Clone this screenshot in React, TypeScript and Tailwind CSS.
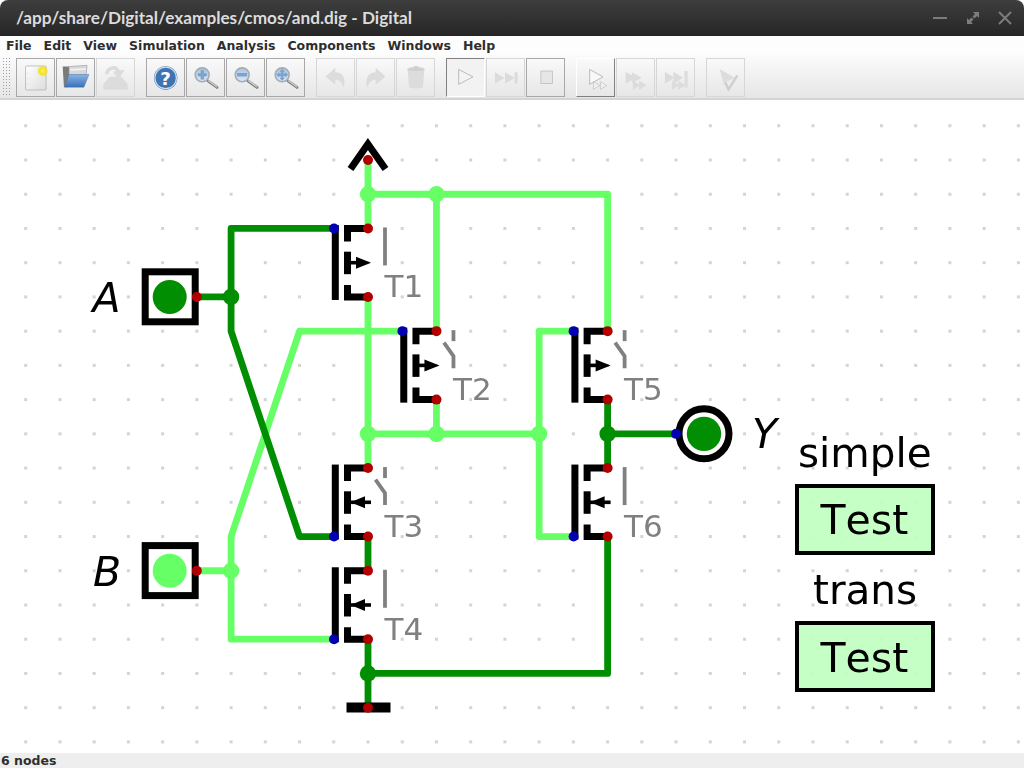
import React from "react";

const LIGHT = "#66ff66";
const DARK = "#028e02";
const RED = "#b20000";
const BLUE = "#0000b2";
const GX = (c: number) => 25.7 + 34.23 * c;
const GY = (r: number) => 160 + 34.23 * r;

type P = [number, number];
const poly = (pts: P[]) => pts.map(([c, r]) => `${GX(c)},${GY(r)}`).join(" ");

const lightWires: P[][] = [
  [[10, 0], [10, 2]],
  [[10, 1], [17, 1], [17, 5]],
  [[12, 1], [12, 5]],
  [[10, 4], [10, 9]],
  [[11, 5], [8, 5], [6, 11], [6, 14], [9, 14]],
  [[5, 12], [6, 12]],
  [[12, 7], [12, 8]],
  [[10, 8], [15, 8]],
  [[16, 5], [15, 5], [15, 11], [16, 11]],
];
const darkWires: P[][] = [
  [[5, 4], [6, 4]],
  [[9, 2], [6, 2], [6, 5], [8, 11], [9, 11]],
  [[10, 11], [10, 12]],
  [[10, 14], [10, 16]],
  [[10, 15], [17, 15], [17, 11]],
  [[17, 7], [17, 9]],
  [[17, 8], [19, 8]],
];
const lightDots: P[] = [[10, 1], [12, 1], [10, 8], [12, 8], [15, 8], [6, 12]];
const darkDots: P[] = [[6, 4], [10, 15], [17, 8]];

function Transistor({ c, r, p, open, label }: { c: number; r: number; p: boolean; open: boolean; label: string }) {
  const x = GX(c);
  const y0 = GY(r);
  const y1 = GY(r + 2);
  const ym = GY(r + 1);
  const swX = x + 17;
  return (
    <g>
      <rect x={x - 36.2} y={y0 - 3.5} width={7} height={75} fill="#000" />
      <polyline points={`${x},${y0} ${x - 20.5},${y0} ${x - 20.5},${y0 + 13}`} fill="none" stroke="#000" strokeWidth={7} />
      <polyline points={`${x},${y1} ${x - 20.5},${y1} ${x - 20.5},${y1 - 12}`} fill="none" stroke="#000" strokeWidth={7} />
      <rect x={x - 24} y={ym - 11} width={7} height={22.5} fill="#000" />
      {p ? (
        <g>
          <line x1={x - 18} y1={ym} x2={x + 3} y2={ym} stroke="#000" strokeWidth={3.6} />
          <polygon points={`${x - 17.5},${ym} ${x - 3},${ym - 6} ${x - 3},${ym + 6}`} fill="#000" />
        </g>
      ) : (
        <g>
          <line x1={x - 18} y1={ym} x2={x - 10} y2={ym} stroke="#000" strokeWidth={3.6} />
          <polygon points={`${x + 3},${ym} ${x - 12},${ym - 6} ${x - 12},${ym + 6}`} fill="#000" />
        </g>
      )}
      {open ? (
        <g>
          <line x1={swX} y1={y0 - 1} x2={swX} y2={y0 + 10} stroke="#808080" strokeWidth={3.8} />
          <polyline points={`${swX - 9.5},${y0 + 11.5} ${swX},${y0 + 25} ${swX},${y0 + 37}`} fill="none" stroke="#808080" strokeWidth={3.8} />
        </g>
      ) : (
        <line x1={swX} y1={y0 - 1} x2={swX} y2={y0 + 37} stroke="#808080" strokeWidth={3.8} />
      )}
      <text x={x + 16.5} y={y1 + 0.5} fontSize={31} fill="#808080" fontFamily="'DejaVu Sans', sans-serif">
        {label}
      </text>
      <circle cx={x - 34} cy={p ? y1 : y0} r={5} fill={BLUE} />
      <circle cx={x} cy={y0} r={5} fill={RED} />
      <circle cx={x} cy={y1} r={5} fill={RED} />
    </g>
  );
}

function Circuit() {
  const cols = Array.from({ length: 30 }, (_, i) => i);
  const rows = Array.from({ length: 19 }, (_, i) => i - 1);
  const sans = "'DejaVu Sans', sans-serif";
  return (
    <svg viewBox="0 100 1024 653" className="block w-full h-full [will-change:transform] [font-kerning:none]">
      {rows.map((r) =>
        cols.map((c) => <rect key={`${r}-${c}`} x={GX(c) - 1.5} y={GY(r) - 1.5} width={3} height={3} fill="#d4d4d4" />)
      )}
      {lightWires.map((w, i) => (
        <polyline key={i} points={poly(w)} fill="none" stroke={LIGHT} strokeWidth={6.8} strokeLinejoin="round" />
      ))}
      {darkWires.map((w, i) => (
        <polyline key={i} points={poly(w)} fill="none" stroke={DARK} strokeWidth={6.8} strokeLinejoin="round" />
      ))}
      {lightDots.map(([c, r], i) => (
        <circle key={i} cx={GX(c)} cy={GY(r)} r={8.2} fill={LIGHT} />
      ))}
      {darkDots.map(([c, r], i) => (
        <circle key={i} cx={GX(c)} cy={GY(r)} r={8.2} fill={DARK} />
      ))}

      <polyline points="350.5,169 367.9,144 385.5,169" fill="none" stroke="#000" strokeWidth={7} />
      <circle cx={GX(10)} cy={GY(0)} r={5} fill={RED} />

      <rect x={346.5} y={702.5} width={44} height={10} fill="#000" />
      <circle cx={GX(10)} cy={GY(16)} r={5} fill={RED} />

      <Transistor c={10} r={2} p={false} open={false} label="T1" />
      <Transistor c={12} r={5} p={false} open={true} label="T2" />
      <Transistor c={10} r={9} p={true} open={true} label="T3" />
      <Transistor c={10} r={12} p={true} open={false} label="T4" />
      <Transistor c={17} r={5} p={false} open={true} label="T5" />
      <Transistor c={17} r={9} p={true} open={false} label="T6" />

      <rect x={145.2} y={271.8} width={50} height={50} fill="none" stroke="#000" strokeWidth={7} />
      <circle cx={169.7} cy={GY(4)} r={17} fill={DARK} />
      <circle cx={GX(5)} cy={GY(4)} r={5} fill={RED} />
      <text x={92.5} y={312} fontSize={41} fontStyle="italic" fontFamily={sans} fill="#000">A</text>

      <rect x={145.2} y={545.6} width={50} height={50} fill="none" stroke="#000" strokeWidth={7} />
      <circle cx={169.7} cy={GY(12)} r={17} fill={LIGHT} />
      <circle cx={GX(5)} cy={GY(12)} r={5} fill={RED} />
      <text x={93} y={586} fontSize={41} fontStyle="italic" fontFamily={sans} fill="#000">B</text>

      <circle cx={704} cy={GY(8)} r={25} fill="#fff" stroke="#000" strokeWidth={7} />
      <circle cx={704} cy={GY(8)} r={17.2} fill={DARK} />
      <circle cx={GX(19)} cy={GY(8)} r={5} fill={BLUE} />
      <text x={752} y={448} fontSize={41} fontStyle="italic" fontFamily={sans} fill="#000">Y</text>

      <text x={798} y={467} fontSize={40.5} fontFamily={sans} fill="#000">simple</text>
      <rect x={797} y={486} width={136} height={67} fill="#c0ffc0" fillOpacity={0.92} stroke="#000" strokeWidth={4} />
      <text x={820.5} y={534} fontSize={41} fontFamily={sans} fill="#000">Test</text>
      <text x={813} y={604} fontSize={40.5} fontFamily={sans} fill="#000">trans</text>
      <rect x={797} y={623} width={136} height={67} fill="#c0ffc0" fillOpacity={0.92} stroke="#000" strokeWidth={4} />
      <text x={820.5} y={671.5} fontSize={41} fontFamily={sans} fill="#000">Test</text>
    </svg>
  );
}

const D = "#dcdcdc";
const Ic = ({ children }: { children: React.ReactNode }) => (
  <svg viewBox="0 0 117 117" className="block w-full h-full">
    {children}
  </svg>
);

function Lens({ mark }: { mark: "plus" | "minus" | "fit" }) {
  return (
    <Ic>
      <defs>
        <linearGradient id={`lg-${mark}`} x1="0" y1="0" x2="0" y2="1">
          <stop offset="0" stopColor="#a8c4e4" />
          <stop offset="1" stopColor="#dce8f4" />
        </linearGradient>
      </defs>
      <line x1="66" y1="69" x2="95" y2="90" stroke="#7f7f7f" strokeWidth={9} strokeLinecap="round" />
      <line x1="68" y1="69" x2="94" y2="88" stroke="#d8d8d8" strokeWidth={3.5} strokeLinecap="round" />
      <circle cx="48" cy="50" r="22" fill={`url(#lg-${mark})`} stroke="#a4acb6" strokeWidth={5} />
      {mark === "plus" && <path d="M35 46h9v-10h9v10h9v8h-9v10h-9v-10h-9z" fill="#7ea4d0" stroke="#5f86b4" strokeWidth={1} />}
      {mark === "minus" && <rect x="33" y="45" width="30" height="9" fill="#7ea4d0" stroke="#5f86b4" strokeWidth={1} />}
      {mark === "fit" && (
        <path d="M48 32l7 8h-4v7h7v-4l8 7-8 7v-4h-7v7h4l-7 8-7-8h4v-7h-7v4l-8-7 8-7v4h7v-7h-4z" fill="#7ea4d0" stroke="#5f86b4" strokeWidth={1} />
      )}
    </Ic>
  );
}

const tri = (x: number, y: number, w: number, h: number) => `${x},${y} ${x + w},${y + h / 2} ${x},${y + h}`;

const icons: Record<string, React.ReactNode> = {
  new: (
    <Ic>
      <defs>
        <linearGradient id="pg" x1="0" y1="0" x2="1" y2="1">
          <stop offset="0" stopColor="#ffffff" />
          <stop offset="1" stopColor="#dcdcdc" />
        </linearGradient>
        <radialGradient id="st">
          <stop offset="0" stopColor="#fff36a" />
          <stop offset="0.6" stopColor="#f5e21c" />
          <stop offset="1" stopColor="#f5e21c" stopOpacity="0.1" />
        </radialGradient>
      </defs>
      <rect x="27" y="22" width="65" height="76" rx="3" fill="url(#pg)" stroke="#b4b4b4" strokeWidth={2.5} />
      <circle cx="33" cy="45" r="1.5" fill="#bbb" />
      <circle cx="33" cy="62" r="1.5" fill="#bbb" />
      <circle cx="33" cy="80" r="1.5" fill="#bbb" />
      <circle cx="81" cy="38" r="18" fill="url(#st)" />
    </Ic>
  ),
  open: (
    <Ic>
      <defs>
        <linearGradient id="fb" x1="0" y1="0" x2="0" y2="1">
          <stop offset="0" stopColor="#8ab4e4" />
          <stop offset="1" stopColor="#3a70b8" />
        </linearGradient>
      </defs>
      <polygon points="18,24 38,24 38,70 30,89 22,89" fill="#7a7a7a" />
      <polygon points="38,24 95,20 92,50 38,50" fill="#d8d8d8" stroke="#9a9a9a" strokeWidth={2} />
      <polygon points="42,32 92,29 92,34 42,37" fill="#f2f2f2" />
      <polygon points="38,49 101,49 85,89 25,89" fill="url(#fb)" stroke="#4a78b4" strokeWidth={1.5} />
    </Ic>
  ),
  save: (
    <Ic>
      <polygon points="20,79 40,56 77,56 97,79 97,97 20,97" fill={D} />
      <path d="M30 48 C36 24 60 22 68 40" fill="none" stroke={D} strokeWidth={11} />
      <polygon points="50,40 88,34 68,64" fill={D} />
    </Ic>
  ),
  help: (
    <Ic>
      <circle cx="59" cy="60" r="37" fill="#3a6ca8" />
      <circle cx="59" cy="60" r="34" fill="#3f74b4" stroke="#cfdcec" strokeWidth={4} />
      <text x="59" y="81" textAnchor="middle" fontSize="58" fontWeight="700" fill="#fff" fontFamily="'DejaVu Sans', sans-serif">?</text>
    </Ic>
  ),
  zoomIn: <Lens mark="plus" />,
  zoomOut: <Lens mark="minus" />,
  zoomFit: <Lens mark="fit" />,
  undo: (
    <Ic>
      <path d="M27 55 L58 28 V42 C80 42 92 58 85 92 C78 72 70 66 58 66 V82 Z" fill={D} />
    </Ic>
  ),
  redo: (
    <Ic>
      <path d="M90 55 L59 28 V42 C37 42 25 58 32 92 C39 72 47 66 59 66 V82 Z" fill={D} />
    </Ic>
  ),
  trash: (
    <Ic>
      <ellipse cx="60" cy="33" rx="28" ry="8" fill="#d0d0d0" />
      <path d="M34 38 H86 L82 90 Q60 96 38 90Z" fill={D} />
      <rect x="54" y="23" width="12" height="5" fill="#c8c8c8" />
    </Ic>
  ),
  play: (
    <Ic>
      <polygon points={tri(37, 33, 45, 47)} fill="#f4f4f4" stroke="#9a9a9a" strokeWidth={2} />
    </Ic>
  ),
  step: (
    <Ic>
      <polygon points={tri(25, 42, 30, 36)} fill={D} />
      <polygon points={tri(57, 42, 30, 36)} fill={D} />
      <rect x="87" y="42" width="10" height="36" fill={D} />
    </Ic>
  ),
  stop: (
    <Ic>
      <rect x="44" y="38" width="36" height="40" fill="#e6e6e6" stroke="#b0b0b0" strokeWidth={2} />
    </Ic>
  ),
  fast: (
    <Ic>
      <polygon points={tri(40, 33, 42, 47)} fill="#f8f8f8" stroke="#9a9a9a" strokeWidth={2} />
      <polygon points={tri(52, 72, 20, 24)} fill="#f0f0f0" stroke="#aaa" strokeWidth={1.5} />
      <polygon points={tri(74, 72, 20, 24)} fill="#f0f0f0" stroke="#aaa" strokeWidth={1.5} />
    </Ic>
  ),
  next: (
    <Ic>
      <polygon points={tri(27, 40, 34, 38)} fill={D} />
      <polygon points={tri(48, 42, 30, 34)} fill={D} />
      <polygon points={tri(50, 68, 24, 30)} fill={D} />
      <polygon points={tri(70, 68, 24, 30)} fill={D} />
    </Ic>
  ),
  last: (
    <Ic>
      <polygon points={tri(25, 40, 30, 38)} fill={D} />
      <polygon points={tri(52, 40, 30, 38)} fill={D} />
      <rect x="87" y="38" width="10" height="52" fill={D} />
      <polygon points={tri(47, 68, 24, 30)} fill={D} />
      <polygon points={tri(67, 68, 24, 30)} fill={D} />
    </Ic>
  ),
  check: (
    <Ic>
      <polygon points="40,32 88,60 60,72 54,84" fill={D} />
      <path d="M58 74 L68 96 L96 52" fill="none" stroke="#cfcfcf" strokeWidth={8} />
    </Ic>
  ),
};

type Btn = { i: string; s?: "enabled" | "disabled" | "pressed" | "raised" | "active" };
const groups: Btn[][] = [
  [{ i: "new", s: "enabled" }, { i: "open", s: "enabled" }, { i: "save" }],
  [{ i: "help", s: "enabled" }, { i: "zoomIn", s: "enabled" }, { i: "zoomOut", s: "enabled" }, { i: "zoomFit", s: "enabled" }],
  [{ i: "undo" }, { i: "redo" }, { i: "trash" }],
  [{ i: "play", s: "pressed" }, { i: "step" }, { i: "stop", s: "active" }],
  [{ i: "fast", s: "raised" }, { i: "next" }, { i: "last" }],
  [{ i: "check" }],
];

const btnCls: Record<string, string> = {
  enabled: "border border-[#a8a8a8]",
  disabled: "border border-[#d6d6d6]",
  pressed: "border border-t-[#808080] border-l-[#808080] border-b-white border-r-white bg-[#f2f2f2]",
  raised: "border border-t-white border-l-white border-b-[#808080] border-r-[#808080]",
  active: "border border-[#a8a8a8]",
};

function Toolbar() {
  return (
    <div className="flex items-center h-[45px] pt-[1px] border-b-2 border-[#d4d4d4] bg-gradient-to-b from-[#fbfbfb] to-[#e6e6e6]">
      <div className="ml-[3px] mr-[4px] w-[9px] h-[39px] grid grid-cols-3 grid-rows-[repeat(13,3px)] overflow-hidden">
        {Array.from({ length: 39 }, (_, i) => (
          <span key={i} className="block w-[1px] h-[1px] bg-[#a0a0a0]" />
        ))}
      </div>
      <div className="flex gap-[11px]">
        {groups.map((g, k) => (
          <div key={k} className="flex gap-[1px]">
            {g.map((b) => (
              <div key={b.i} className={`w-[39px] h-[39px] ${btnCls[b.s ?? "disabled"]}`}>
                {icons[b.i]}
              </div>
            ))}
          </div>
        ))}
      </div>
    </div>
  );
}

const menus = ["File", "Edit", "View", "Simulation", "Analysis", "Components", "Windows", "Help"];

export default function App() {
  return (
    <div className="w-[1024px] h-[768px] flex flex-col overflow-hidden bg-white">
      <div className="h-[36px] flex items-center justify-between rounded-t-[8px] bg-gradient-to-b from-[#3e3e3e] to-[#262626] pl-[16px] pr-[12px]">
        <span className="text-[#dcdcdc] text-[17.2px] font-bold font-['Lato',sans-serif]">
          /app/share/Digital/examples/cmos/and.dig - Digital
        </span>
        <div className="flex items-center gap-[18px]">
          <svg width="16" height="16" viewBox="0 0 16 16">
            <rect x="1" y="7" width="14" height="2" fill="#7c7c7c" />
          </svg>
          <svg width="14" height="14" viewBox="0 0 14 14">
            <path d="M7 1h6v6l-2-2-2.500 2.500-2-2L9 3zM7 13H1V7l2 2 2.500-2.500 2 2L5 11z" fill="#7c7c7c" />
          </svg>
          <svg width="14" height="14" viewBox="0 0 14 14">
            <path d="M1 1l12 12M13 1L1 13" stroke="#7c7c7c" strokeWidth="2" />
          </svg>
        </div>
      </div>
      <div className="h-[19px] flex items-center gap-[12px] pl-[6px] pt-[2px] bg-[#fdfdfd] text-[#2e2e2e] text-[12.5px] font-bold font-['DejaVu_Sans',sans-serif]">
        {menus.map((m) => (
          <span key={m}>{m}</span>
        ))}
      </div>
      <Toolbar />
      <div className="flex-1 min-h-0 bg-white">
        <Circuit />
      </div>
      <div className="h-[15px] pl-[1px] leading-[15px] bg-[#eeeeee] text-[#2e2e2e] text-[12.5px] font-bold font-['DejaVu_Sans',sans-serif]">
        6 nodes
      </div>
    </div>
  );
}
